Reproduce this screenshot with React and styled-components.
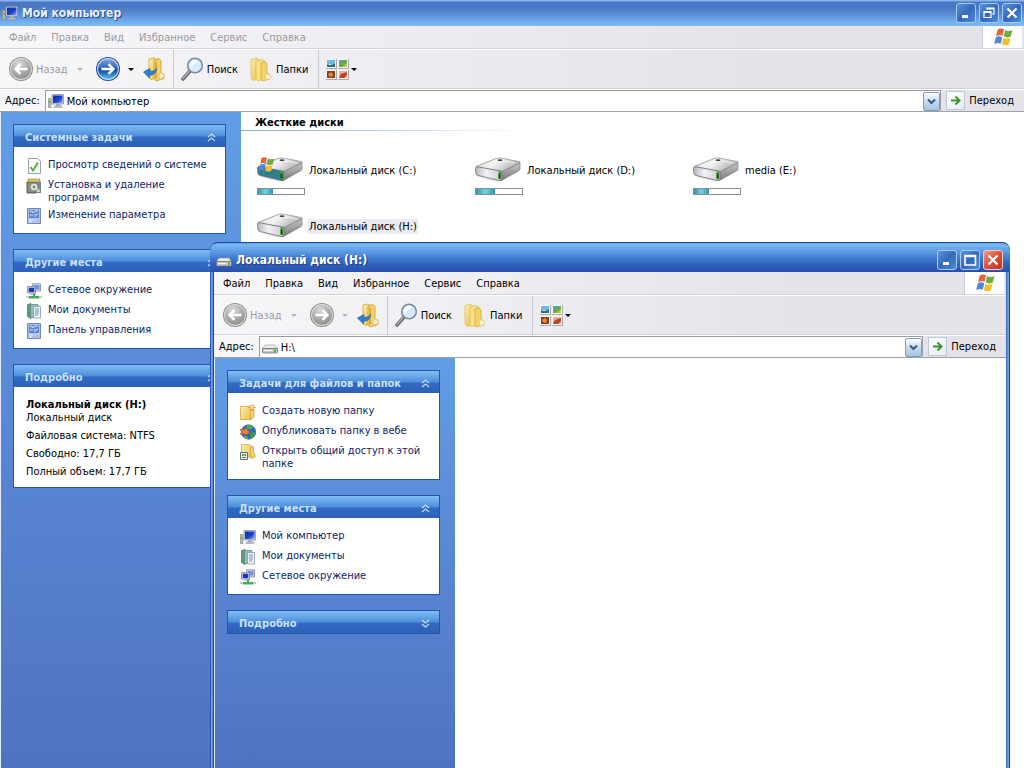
import React, { useId, useState } from "react";
import styled, { createGlobalStyle } from "styled-components";

const GlobalStyle = createGlobalStyle`
  * {
    box-sizing: border-box;
  }

  body {
    margin: 0;
    overflow: hidden;
    background: #ffffff;
  }

  body, button, input {
    font-family: "DejaVu Sans Condensed", "DejaVu Sans", sans-serif;
    font-size: 11px;
    line-height: 13px;
    color: #000000;
  }

  button {
    border: none;
    padding: 0;
    background: none;
  }

  svg {
    display: block;
    flex: none;
  }
`;

const Desktop = styled.div`
  position: relative;
  height: 100vh;
  overflow: hidden;
`;

const MainWindow = styled.section`
  display: flex;
  flex-direction: column;
  height: 100%;
`;

const FloatingWindow = styled.section`
  position: absolute;
  top: 242px;
  left: 210px;
  right: 14px;
  bottom: 0;
  display: flex;
  flex-direction: column;
  overflow: hidden;
  padding: 0 4px;
  border-radius: 8px 8px 0 0;
  background: linear-gradient(to right, #2c57b4 1px, #76a6ea 1px, #5288dc 3px, #1f4596 3px, #1f4596 5px, #2c57b4 calc(100% - 4px), #5288dc calc(100% - 3px), #76a6ea calc(100% - 1px), #1f4596 calc(100% - 1px));
`;

const TitleBar = styled.header`
  display: flex;
  align-items: center;
  gap: 4px;
  flex: none;
  height: ${(props) => (props.$active ? "30px" : "26px")};
  margin: ${(props) => (props.$active ? "0 -4px" : "0")};
  padding: ${(props) => (props.$active ? "4px 7px 0 6px" : "0 2px")};
  border-top: ${(props) => (props.$active ? "1px solid #1f4596" : "none")};
  border-radius: ${(props) => (props.$active ? "8px 8px 0 0" : "0")};
  background: ${(props) =>
    props.$active
      ? "linear-gradient(#63a8ee, #78b8f2 2px, #64a2e6 7px, #4480d4 14px, #2f62bc 21px, #2850ac)"
      : "linear-gradient(#86b6ee 1px, #4a76c2 2px, #4c7ac6 8px, #5a8fd8 15px, #74b0ec 22px, #7dbaf0)"};
`;

const TitleText = styled.h1`
  flex: 1;
  margin: 0;
  font-family: "DejaVu Sans Condensed", "DejaVu Sans", sans-serif;
  font-size: 12px;
  line-height: 16px;
  font-weight: bold;
  color: ${(props) => (props.$active ? "#ffffff" : "#e9f3ff")};
  text-shadow: 1px 1px 1px #1c3f88;
`;

const TitleButtons = styled.div`
  display: flex;
  gap: 3px;
`;

const TitleButton = styled.button`
  display: flex;
  align-items: center;
  justify-content: center;
  width: 20px;
  height: 20px;
  border: 1px solid ${(props) => (props.$danger ? "#f3c9c4" : "#a9cdf6")};
  border-radius: 3px;
  background: ${(props) =>
    props.$danger
      ? "linear-gradient(135deg, #ee9a86, #d9523c 50%, #b93520)"
      : "linear-gradient(135deg, #5b93dc, #3568bd 50%, #4c8ad9)"};
`;

const MenuBar = styled.nav`
  display: flex;
  align-items: center;
  flex: none;
  gap: 15px;
  height: 23px;
  padding: 0 2px 0 9px;
  border-bottom: 1px solid #d2d1d8;
  background: linear-gradient(to right, #f7f7f9, #e4e3e9 75%);
`;

const MenuItem = styled.button`
  color: ${(props) => (props.$muted ? "#9b9aa1" : "#000000")};
`;

const FlagBox = styled.div`
  display: flex;
  align-items: center;
  justify-content: center;
  align-self: stretch;
  width: 40px;
  margin-left: auto;
  border-left: 1px solid #cfced5;
  background: #ffffff;
`;

const ToolBar = styled.div`
  display: flex;
  align-items: center;
  flex: none;
  height: 40px;
  padding-left: 8px;
  border-top: 1px solid #ffffff;
  border-bottom: 1px solid #d2d1d8;
  background: linear-gradient(to right, #f7f7f9, #e4e3e9 75%);
`;

const ToolButton = styled.button`
  display: flex;
  align-items: center;
  gap: ${(props) => props.$gap || "4px"};
  margin-right: ${(props) => props.$after || "0"};
  color: ${(props) => (props.disabled ? "#9b9aa1" : "#000000")};
`;

const ToolSeparator = styled.span`
  align-self: stretch;
  width: 1px;
  margin-right: 7px;
  background: #cbcad2;
`;

const Caret = styled.span`
  width: 0;
  height: 0;
  margin-left: ${(props) => props.$before || "0"};
  border: 3px solid transparent;
  border-bottom-width: 0;
  border-top-color: ${(props) => (props.$muted ? "#b3b2b8" : "#000000")};
`;

const AddressBar = styled.form`
  display: flex;
  align-items: center;
  flex: none;
  gap: 5px;
  height: 23px;
  padding: 0 10px 0 5px;
  border-top: 1px solid #ffffff;
  border-bottom: 1px solid #a0a0a6;
  background: linear-gradient(to right, #f7f7f9, #e4e3e9 75%);
`;

const AddressField = styled.div`
  display: flex;
  align-items: center;
  flex: 1;
  align-self: stretch;
  gap: 3px;
  padding: 0 0 0 2px;
  border: 1px solid #9c9ca4;
  border-bottom: none;
  background: #ffffff;
`;

const AddressInput = styled.input`
  flex: 1;
  min-width: 0;
  padding: 1px 0 0;
  border: none;
  outline: none;
  background: none;
`;

const DropButton = styled.button`
  display: flex;
  align-items: center;
  justify-content: center;
  width: 17px;
  height: 19px;
  border: 1px solid #7f9db9;
  border-radius: 2px;
  background: linear-gradient(#ffffff, #c4dcf0 50%, #a3c4e0);
`;

const GoButton = styled.button`
  display: flex;
  align-items: center;
  gap: 4px;
`;

const GoIcon = styled.span`
  display: flex;
  align-items: center;
  justify-content: center;
  width: 19px;
  height: 19px;
  border: 1px solid #bcc9d6;
  background: linear-gradient(135deg, #ffffff, #e6ecf2);
`;

const Body = styled.div`
  display: flex;
  flex: 1;
  min-height: 0;
  border-left: 1px solid #e3edfb;
  background: #ffffff;
`;

const SideBar = styled.aside`
  display: flex;
  flex-direction: column;
  flex: none;
  gap: 15px;
  width: 240px;
  padding: 12px 15px 12px 12px;
  background: linear-gradient(#629de7, #5a8bd8 40%, #5072c2);
`;

const Panel = styled.section`
  border: 1px solid #2456a8;
  background: #ffffff;
`;

const PanelHeader = styled.button`
  display: flex;
  align-items: center;
  justify-content: space-between;
  width: 100%;
  height: 22px;
  padding: 2px 9px 0 11px;
  font-weight: bold;
  color: #cbe1fa;
  background: linear-gradient(#82bcf2, #6aa8ea 5px, #4d8edc 11px, #326bc4 12px, #2d60b8);
`;

const PanelBody = styled.div`
  display: flex;
  flex-direction: column;
  gap: ${(props) => props.$gap || "4px"};
  padding: 11px 12px 9px;
`;

const TaskLink = styled.a`
  display: flex;
  align-items: flex-start;
  gap: 6px;
  color: #0b2468;
  text-decoration: none;

  &:hover {
    text-decoration: underline;
  }
`;

const DetailText = styled.p`
  margin: 0;
`;

const Files = styled.main`
  flex: 1;
  min-width: 0;
`;

const GroupTitle = styled.h2`
  margin: 0;
  padding: 4px 0 1px 14px;
  font-size: 11px;
  line-height: 13px;
`;

const GroupLine = styled.div`
  width: 286px;
  height: 1px;
  background: linear-gradient(to right, #7ea8e4, #ffffff);
`;

const DriveGrid = styled.div`
  display: grid;
  grid-template-columns: repeat(auto-fill, 218px);
  grid-auto-rows: 56px;
  padding: 26px 0 0 16px;
`;

const Drive = styled.div`
  display: grid;
  grid-template-columns: 48px auto;
  grid-template-rows: 26px 8px;
  justify-content: start;
  align-items: center;
  gap: 4px 3px;
`;

const DriveName = styled.span`
  padding: 1px;
  background: ${(props) => (props.$selected ? "#ecebf1" : "transparent")};
`;

const Usage = styled.div`
  height: 7px;
  border: 1px solid #8a8a90;
  background: #ffffff;
`;

const UsageFill = styled.div`
  height: 100%;
  background: linear-gradient(to right, #3c93a6, #6fd6e4 50%, #2f93a6);
`;

const GradientDefs = styled.svg`
  position: absolute;
`;

function SharedGradients() {
  return (
    <GradientDefs width="0" height="0" aria-hidden="true">
      <defs>
        <linearGradient id="flagRed" x1="0" y1="0" x2="1" y2="1">
          <stop offset="0" stopColor="#d8502a" />
          <stop offset="1" stopColor="#ee7b4a" />
        </linearGradient>
        <radialGradient id="ballGray" cx="0.4" cy="0.25" r="0.8">
          <stop offset="0" stopColor="#dcdcdc" />
          <stop offset="0.6" stopColor="#a9a9a9" />
          <stop offset="1" stopColor="#8b8b8b" />
        </radialGradient>
        <linearGradient id="ballBlue" x1="0" y1="0" x2="0" y2="1">
          <stop offset="0" stopColor="#86a9e2" />
          <stop offset="0.45" stopColor="#2f62bd" />
          <stop offset="0.55" stopColor="#17469f" />
          <stop offset="1" stopColor="#4fc0f4" />
        </linearGradient>
        <linearGradient id="folder" x1="0" y1="0" x2="1" y2="1">
          <stop offset="0" stopColor="#fdf0a8" />
          <stop offset="1" stopColor="#e8bf4c" />
        </linearGradient>
        <linearGradient id="driveTop" x1="0" y1="0" x2="1" y2="0.4">
          <stop offset="0" stopColor="#c4c4c6" />
          <stop offset="0.5" stopColor="#f4f4f5" />
          <stop offset="1" stopColor="#b2b2b5" />
        </linearGradient>
        <linearGradient id="driveFront" x1="0" y1="0" x2="1" y2="0">
          <stop offset="0" stopColor="#b5b5be" />
          <stop offset="0.4" stopColor="#f2f2f8" />
          <stop offset="1" stopColor="#c9c9d2" />
        </linearGradient>
        <linearGradient id="driveSide" x1="0" y1="0" x2="0" y2="1">
          <stop offset="0" stopColor="#c6c6c8" />
          <stop offset="1" stopColor="#77777a" />
        </linearGradient>
        <linearGradient id="screen" x1="0" y1="0" x2="1" y2="1">
          <stop offset="0" stopColor="#0a2aa8" />
          <stop offset="0.6" stopColor="#1e46cf" />
          <stop offset="1" stopColor="#8fb4f4" />
        </linearGradient>
      </defs>
    </GradientDefs>
  );
}

function FlagShape() {
  return (
    <>
      <path d="M4 2.6C6 1 8 1.2 10 2.3L8.6 8.6C6.6 7.5 4.6 7.5 2.4 9z" fill="url(#flagRed)" />
      <path d="M11 2.8C13.2 4 15.4 4 18 2.8L16.4 9.1C14 10.2 11.7 10.1 9.6 9.1z" fill="#6fae3c" />
      <path d="M2.2 10C4.2 8.5 6.4 8.6 8.4 9.7L6.9 16C4.9 14.9 2.8 15 .6 16.4z" fill="#4f86dd" />
      <path d="M9.4 10.2C11.6 11.3 13.8 11.3 16.2 10.2L14.6 16.6C12.2 17.7 10 17.5 7.9 16.5z" fill="#f3c030" />
    </>
  );
}

function FlagIcon() {
  return (
    <svg width="22" height="20" viewBox="-1 0 20 19" aria-hidden="true">
      <FlagShape />
    </svg>
  );
}

function ArrowBall({ blue, back }) {
  return (
    <svg width="26" height="26" viewBox="0 0 26 26" aria-hidden="true">
      <circle cx="13" cy="13" r="12" fill={blue ? "#27488f" : "#8f8f8f"} />
      <circle cx="13" cy="13" r="10.9" fill={blue ? "#cfe2fa" : "#dedede"} />
      <circle cx="13" cy="13" r="10" fill={blue ? "url(#ballBlue)" : "url(#ballGray)"} />
      <path
        d="M6.5 13H18M13.5 8.2L18.4 13L13.5 17.8"
        transform={back ? "rotate(180 13 13)" : undefined}
        fill="none"
        stroke="#ffffff"
        strokeWidth="2.4"
      />
    </svg>
  );
}

function FolderUpIcon() {
  return (
    <svg width="24" height="26" viewBox="0 0 24 26" aria-hidden="true">
      <path d="M7 3L12 2L15 4V22L9 23.5L7 22z" fill="url(#folder)" stroke="#d2a63c" strokeWidth=".8" />
      <path d="M12 4L17 2.5L19 4.5V17L22 18V22.5L14 25L12 23z" fill="#f3d267" stroke="#cd9c34" strokeWidth=".8" />
      <path d="M13 6L15 5.5V22L13 22.5z" fill="#dca93c" />
      <path d="M18 17.5H21.5V21.5L18 22.5z" fill="#faf0c4" />
      <path d="M14.5 12C13.5 14.8 11 15.6 8 15.2V12.5L1.5 16L7.5 22V19.2C11.5 19.2 14.5 17 14.5 12z" fill="#2f7fd0" stroke="#2361ad" strokeWidth=".7" />
    </svg>
  );
}

function SearchIcon() {
  return (
    <svg width="23" height="24" viewBox="0 0 23 24" aria-hidden="true">
      <path d="M9 14L2 22" stroke="#6a6a70" strokeWidth="3.6" strokeLinecap="round" />
      <path d="M8 14.5L2 21.5" stroke="#b4b4ba" strokeWidth="1.2" strokeLinecap="round" />
      <circle cx="14" cy="8.5" r="7.3" fill="#d5ebfb" stroke="#7d8ba5" strokeWidth="1.6" />
      <path d="M9 8A5 5 0 0 1 17 4.2C14.5 6 12 8 9.5 11z" fill="#ffffff" opacity=".85" />
    </svg>
  );
}

function FoldersIcon() {
  return (
    <svg width="22" height="25" viewBox="0 0 22 25" aria-hidden="true">
      <path d="M1 2.5L7 1L9 3V22L3 23.5L1 21z" fill="url(#folder)" stroke="#dcb85a" strokeWidth=".7" />
      <path d="M6 4L12 2.5L15 4.5V21L8 24L6 22z" fill="#f8e184" stroke="#dcb85a" strokeWidth=".7" />
      <path d="M11 6L15 4.5L17 7V16L20 18V22L12 24L11 22z" fill="#f2d36a" stroke="#cfa23c" strokeWidth=".7" />
      <path d="M16 17.5L20 18V21.5L16 22.5z" fill="#f9f1cf" />
    </svg>
  );
}

function ViewsIcon() {
  return (
    <svg width="23" height="21" viewBox="0 0 23 21" aria-hidden="true">
      <path d="M0 0H11V10H0zM12 0H23V10H12zM0 11H11V21H0zM12 11H23V21H12z" fill="#a9a9ae" />
      <path d="M0 0H10V9H0zM12 0H22V9H12zM0 11H10V20H0zM12 11H22V20H12z" fill="#f7f7f7" />
      <path d="M1 1H9V5H1z" fill="#6db7ea" />
      <path d="M1 8V5L4 6L9 4.500V8z" fill="#2f6f86" />
      <path d="M13 1H21V8H13z" fill="#6aa84a" />
      <path d="M13 1H18L13 5z" fill="#5a9ad8" />
      <path d="M16 8L21 4V8z" fill="#b3c94c" />
      <path d="M1 12H9V19H1z" fill="#8f3f18" />
      <path d="M2 15L5 13L7 15L6 18L3 17z" fill="#e88a36" />
      <path d="M13 12H21V19H13z" fill="#eeb08a" />
      <path d="M13 19L15 15L21 13V16L18 19z" fill="#b9431f" />
    </svg>
  );
}

function ComputerIcon() {
  return (
    <svg width="16" height="16" viewBox="0 0 16 16" aria-hidden="true">
      <path d="M.5 5.5H3V14.5H.5z" fill="#b8c4b2" stroke="#7f8c80" strokeWidth=".7" />
      <path d="M1 8H2.5V10H1z" fill="#63b14f" />
      <path d="M4 1.5H15.5V11H4z" fill="#cfd2dc" stroke="#8a90a4" strokeWidth=".8" />
      <path d="M5 2.5H14.5V10H5z" fill="url(#screen)" />
      <path d="M8 11H12V13H8z" fill="#a9acb6" />
      <path d="M6 13H14V14.5H6z" fill="#c9cbd2" stroke="#8b8e99" strokeWidth=".5" />
    </svg>
  );
}

function SmallDriveIcon() {
  return (
    <svg width="16" height="16" viewBox="0 0 16 16" aria-hidden="true">
      <path d="M3 6H13L15.5 9.5H.5z" fill="#ececec" stroke="#909090" strokeWidth=".6" />
      <path d="M.5 9.500H15.500V13Q15.500 14 14.500 14H1.500Q.5 14 .5 13z" fill="#c8c8c8" stroke="#6f6f6f" strokeWidth=".8" />
      <path d="M2 11.500H10" stroke="#f4f4f4" />
      <path d="M12 10.500H14V13H12z" fill="#4eb52c" />
    </svg>
  );
}

function CheckDocIcon() {
  return (
    <svg width="16" height="16" viewBox="0 0 16 16" aria-hidden="true">
      <path d="M2.5 .5H11L14.5 3V15.5H2.5z" fill="#fdfdfd" stroke="#9ba0a8" />
      <path d="M4.5 9L7 12.5L12 4.5" fill="none" stroke="#58b53c" strokeWidth="2" />
    </svg>
  );
}

function ProgramsIcon() {
  return (
    <svg width="16" height="16" viewBox="0 0 16 16" aria-hidden="true">
      <path d="M1 4H10V15H1z" fill="#8f9088" stroke="#3c3d3a" strokeWidth=".8" />
      <path d="M2 1H14V4H2z" fill="#d6c46a" stroke="#8c7f3a" strokeWidth=".6" />
      <path d="M10 4H15V15H10z" fill="#7a8494" />
      <circle cx="8" cy="9" r="4" fill="#dfe0dc" stroke="#77786f" strokeWidth=".8" />
      <circle cx="8" cy="9" r="1.2" fill="#6c6d66" />
      <path d="M11 10L14 12V14H10z" fill="#c8cbb0" />
    </svg>
  );
}

function SettingsIcon() {
  return (
    <svg width="16" height="16" viewBox="0 0 16 16" aria-hidden="true">
      <path d="M1.5 .5H14.5V15.5H1.5z" fill="#a9c4f0" stroke="#6f86b6" />
      <path d="M3 2H13V10H3z" fill="#5c86d6" />
      <path d="M4 4L6 3L7 5L9 3H12M4 7H7M9 6V9M10 7L12 6" stroke="#dce8fb" fill="none" />
      <path d="M3 12H7M9 12H10M12 12H13M3 14H6" stroke="#f5f8ff" />
      <path d="M10 13H13" stroke="#d4a04a" />
    </svg>
  );
}

function NetworkIcon() {
  return (
    <svg width="16" height="16" viewBox="0 0 16 16" aria-hidden="true">
      <path d="M6.5 .8H14.5V8H6.5z" fill="#d4d8e4" stroke="#8189a2" strokeWidth=".8" />
      <path d="M8 2H13.5V6.5H8z" fill="#6f95e6" />
      <path d="M1.5 3.5H9.5V10H1.5z" fill="#dde0ea" stroke="#7a829a" strokeWidth=".8" />
      <path d="M2.7 4.7H8.3V9H2.7z" fill="#1b35c0" />
      <path d="M4 10H10V11.5H4z" fill="#a7abb9" />
      <path d="M7 11H9V13H13V15.5H3V13H7z" fill="#3fae58" />
      <path d="M0 14H3M13 14H16" stroke="#8e939c" />
    </svg>
  );
}

function DocumentsIcon() {
  return (
    <svg width="16" height="16" viewBox="0 0 16 16" aria-hidden="true">
      <path d="M1.5 1.5L5 .5V15.5L1.5 13.5z" fill="#5f9a86" stroke="#3e7464" strokeWidth=".7" />
      <path d="M4.5 1.5H12V14.5H4.5z" fill="#93bfae" stroke="#578a79" strokeWidth=".7" />
      <path d="M7.5 3.5H14.5V15H7.5z" fill="#eef4fb" stroke="#7f95b2" strokeWidth=".8" />
      <path d="M9 6H13M9 8H13M9 10H13M9 12H12" stroke="#6f8fc0" />
    </svg>
  );
}

function NewFolderIcon() {
  return (
    <svg width="16" height="16" viewBox="0 0 16 16" aria-hidden="true">
      <path d="M.5 2.5H9.500L11 4V15.5H.5z" fill="url(#folder)" stroke="#d2aa45" strokeWidth=".8" />
      <path d="M10 7L14 5.5V13L11 15.500z" fill="#f4d66e" stroke="#c9a040" strokeWidth=".8" />
      <path d="M12 0V7M8.5 3.5H15.5M9.5 1L14.5 6M14.5 1L9.5 6" stroke="#d9821e" strokeWidth=".9" />
      <circle cx="12" cy="3.5" r="1.3" fill="#fff0a0" />
    </svg>
  );
}

function WebIcon() {
  return (
    <svg width="16" height="16" viewBox="0 0 16 16" aria-hidden="true">
      <circle cx="8.5" cy="8" r="7.2" fill="#2d66c6" stroke="#234a8a" strokeWidth=".6" />
      <path d="M7 1.2C10 .6 12.5 2 13 3.5L10 6L6.5 4z" fill="#4fae4a" />
      <path d="M10 9L15 8C15 12 12 14.5 10 15z" fill="#3c9a48" />
      <path d="M3 12L7 12.5L8 15C5.5 15 4 13.5 3 12z" fill="#67b85c" />
      <path d="M0 5.500H5V3.500L10 8L5 12V10H0L2 8z" fill="#ea8436" stroke="#a34d18" strokeWidth=".7" />
    </svg>
  );
}

function ShareIcon() {
  return (
    <svg width="16" height="16" viewBox="0 0 16 16" aria-hidden="true">
      <path d="M1.5 .5H10L11.500 2V13H1.5z" fill="url(#folder)" stroke="#d2aa45" strokeWidth=".8" />
      <path d="M10.500 3.500L13.5 2.500V9L15 10V13L11 14.500z" fill="#f4d66e" stroke="#c9a040" strokeWidth=".8" />
      <path d="M.5 8.5H7.5V15.5H.5z" fill="#e9f2f5" stroke="#5c6a74" />
      <path d="M2 10H3.5V12H2zM4.5 10H6V12H4.5zM2 13H6V14H2z" fill="#4a7f56" />
    </svg>
  );
}

function DriveIcon({ system }) {
  return (
    <svg width="46" height="26" viewBox="0 0 46 26" aria-hidden="true">
      <path d="M1 19L22 25L45 14L44 12L20 22z" fill="#d4d4d6" opacity=".7" />
      <path d="M1 9.5L21 1.500Q24 .6 27 1.200L44 4.500Q46 5 44.500 6.500L27 14.500L2 10z" fill="url(#driveTop)" stroke="#8d8d90" strokeWidth=".7" />
      <path d="M8 9L23 3L40 6" fill="none" stroke="#ffffff" strokeWidth=".8" opacity=".8" />
      <path d="M27 14.5L45 6V12Q45 13 44 13.500L27.500 23Q26 24 24 23.500L25 16z" fill="url(#driveSide)" stroke="#77777a" strokeWidth=".6" />
      <path d="M.6 11Q.6 9.500 2.500 9.800L25.500 14Q27 14.500 27 16V22Q27 24 24.500 23.500L3 18.500Q1 18 .8 16z" fill={system ? "#2f7f8c" : "url(#driveFront)"} stroke="#6e6e74" strokeWidth=".8" />
      <path d="M23.5 14L26.5 14.5V22.5L23.5 22z" fill="#4aa83c" />
      <path d="M24.5 16.5V21.5" stroke="#16351a" strokeWidth="1.6" />
      <ellipse cx="25" cy="3.2" rx="2.5" ry=".9" fill="#45454a" />
      {system && (
        <g transform="translate(1 -1) scale(.9)">
          <FlagShape />
        </g>
      )}
    </svg>
  );
}

function ChevronIcon({ open }) {
  return (
    <svg width="9" height="9" viewBox="0 0 9 9" aria-hidden="true">
      <path
        d="M1 4L4.5 1L8 4M1 8L4.5 5L8 8"
        transform={open ? undefined : "rotate(180 4.5 4.5)"}
        fill="none"
        stroke="#c3dcf8"
        strokeWidth="1.2"
      />
    </svg>
  );
}

const titleGlyphs = {
  minimize: <path d="M4 11.5H10" stroke="#ffffff" strokeWidth="3" />,
  maximize: <path d="M3 3.5H13.5V13H3zM3 4.5H13.5" fill="none" stroke="#ffffff" strokeWidth="1.6" />,
  restore: <path d="M6 5V3H13V9H11M6 4H13M3 6.5H10V12.5H3zM3 7.5H10" fill="none" stroke="#ffffff" strokeWidth="1.2" />,
  close: <path d="M3.5 3.5L12.5 12.5M12.5 3.5L3.5 12.5" stroke="#ffffff" strokeWidth="2.2" />,
};

function WindowButton({ kind, label, danger }) {
  return (
    <TitleButton type="button" aria-label={label} $danger={danger}>
      <svg width="16" height="16" viewBox="0 0 16 16" aria-hidden="true">
        {titleGlyphs[kind]}
      </svg>
    </TitleButton>
  );
}

const menuItems = ["Файл", "Правка", "Вид", "Избранное", "Сервис", "Справка"];

function WindowHead({ title, icon, address, active, canForward }) {
  const addressId = useId();
  const [value, setValue] = useState(address);

  return (
    <>
      <TitleBar $active={active}>
        {icon}
        <TitleText $active={active}>{title}</TitleText>
        <TitleButtons>
          <WindowButton kind="minimize" label="Свернуть" />
          <WindowButton
            kind={active ? "maximize" : "restore"}
            label={active ? "Развернуть" : "Восстановить"}
          />
          <WindowButton kind="close" label="Закрыть" danger={active} />
        </TitleButtons>
      </TitleBar>
      <MenuBar>
        {menuItems.map((item) => (
          <MenuItem key={item} type="button" $muted={!active}>
            {item}
          </MenuItem>
        ))}
        <FlagBox>
          <FlagIcon />
        </FlagBox>
      </MenuBar>
      <ToolBar>
        <ToolButton type="button" disabled $gap="2px" $after="12px">
          <ArrowBall back />
          Назад
          <Caret $muted $before="7px" />
        </ToolButton>
        <ToolButton type="button" aria-label="Вперед" disabled={!canForward} $gap="7px" $after="8px">
          <ArrowBall blue={canForward} />
          <Caret $muted={!canForward} />
        </ToolButton>
        <ToolButton type="button" aria-label="Вверх" $after="7px">
          <FolderUpIcon />
        </ToolButton>
        <ToolSeparator />
        <ToolButton type="button" $gap="3px" $after="12px">
          <SearchIcon />
          Поиск
        </ToolButton>
        <ToolButton type="button" $after="10px">
          <FoldersIcon />
          Папки
        </ToolButton>
        <ToolSeparator />
        <ToolButton type="button" aria-label="Вид" $gap="2px">
          <ViewsIcon />
          <Caret />
        </ToolButton>
      </ToolBar>
      <AddressBar onSubmit={(e) => e.preventDefault()}>
        <label htmlFor={addressId}>Адрес:</label>
        <AddressField>
          {icon}
          <AddressInput
            id={addressId}
            type="text"
            value={value}
            onChange={(e) => setValue(e.target.value)}
          />
          <DropButton type="button" aria-label="Список адресов">
            <svg width="9" height="7" viewBox="0 0 9 7" aria-hidden="true">
              <path d="M1 1.5L4.5 5L8 1.5" fill="none" stroke="#3f5877" strokeWidth="2" />
            </svg>
          </DropButton>
        </AddressField>
        <GoButton type="submit">
          <GoIcon>
            <svg width="13" height="13" viewBox="0 0 13 13" aria-hidden="true">
              <path d="M2 6.5H10M6.5 2.500L10.500 6.5L6.5 10.500" fill="none" stroke="#37962f" strokeWidth="2" />
            </svg>
          </GoIcon>
          Переход
        </GoButton>
      </AddressBar>
    </>
  );
}

function TaskPanel({ title, gap, defaultOpen = true, children }) {
  const [open, setOpen] = useState(defaultOpen);

  return (
    <Panel>
      <PanelHeader type="button" aria-expanded={open} onClick={() => setOpen(!open)}>
        {title}
        <ChevronIcon open={open} />
      </PanelHeader>
      {open && <PanelBody $gap={gap}>{children}</PanelBody>}
    </Panel>
  );
}

function Task({ icon, children }) {
  return (
    <TaskLink href="#">
      {icon}
      <span>{children}</span>
    </TaskLink>
  );
}

const drives = [
  { name: "Локальный диск (C:)", used: 33, system: true },
  { name: "Локальный диск (D:)", used: 42 },
  { name: "media (E:)", used: 33 },
  { name: "Локальный диск (H:)", selected: true },
];

function App() {
  return (
    <Desktop>
      <GlobalStyle />
      <SharedGradients />
      <MainWindow>
        <WindowHead
          title="Мой компьютер"
          icon={<ComputerIcon />}
          address="Мой компьютер"
          canForward
        />
        <Body>
          <SideBar>
            <TaskPanel title="Системные задачи">
              <Task icon={<CheckDocIcon />}>Просмотр сведений о системе</Task>
              <Task icon={<ProgramsIcon />}>Установка и удаление программ</Task>
              <Task icon={<SettingsIcon />}>Изменение параметра</Task>
            </TaskPanel>
            <TaskPanel title="Другие места">
              <Task icon={<NetworkIcon />}>Сетевое окружение</Task>
              <Task icon={<DocumentsIcon />}>Мои документы</Task>
              <Task icon={<SettingsIcon />}>Панель управления</Task>
            </TaskPanel>
            <TaskPanel title="Подробно" gap="5px">
              <DetailText>
                <b>Локальный диск (H:)</b>
                <br />
                Локальный диск
              </DetailText>
              <DetailText>Файловая система: NTFS</DetailText>
              <DetailText>Свободно: 17,7 ГБ</DetailText>
              <DetailText>Полный объем: 17,7 ГБ</DetailText>
            </TaskPanel>
          </SideBar>
          <Files>
            <GroupTitle>Жесткие диски</GroupTitle>
            <GroupLine />
            <DriveGrid>
              {drives.map((drive) => (
                <Drive key={drive.name}>
                  <DriveIcon system={drive.system} />
                  <DriveName $selected={drive.selected}>{drive.name}</DriveName>
                  {drive.used && (
                    <Usage>
                      <UsageFill style={{ width: `${drive.used}%` }} />
                    </Usage>
                  )}
                </Drive>
              ))}
            </DriveGrid>
          </Files>
        </Body>
      </MainWindow>
      <FloatingWindow>
        <WindowHead
          title="Локальный диск (H:)"
          icon={<SmallDriveIcon />}
          address="H:\"
          active
        />
        <Body>
          <SideBar>
            <TaskPanel title="Задачи для файлов и папок">
              <Task icon={<NewFolderIcon />}>Создать новую папку</Task>
              <Task icon={<WebIcon />}>Опубликовать папку в вебе</Task>
              <Task icon={<ShareIcon />}>Открыть общий доступ к этой папке</Task>
            </TaskPanel>
            <TaskPanel title="Другие места">
              <Task icon={<ComputerIcon />}>Мой компьютер</Task>
              <Task icon={<DocumentsIcon />}>Мои документы</Task>
              <Task icon={<NetworkIcon />}>Сетевое окружение</Task>
            </TaskPanel>
            <TaskPanel title="Подробно" defaultOpen={false} />
          </SideBar>
        </Body>
      </FloatingWindow>
    </Desktop>
  );
}

export default App;
